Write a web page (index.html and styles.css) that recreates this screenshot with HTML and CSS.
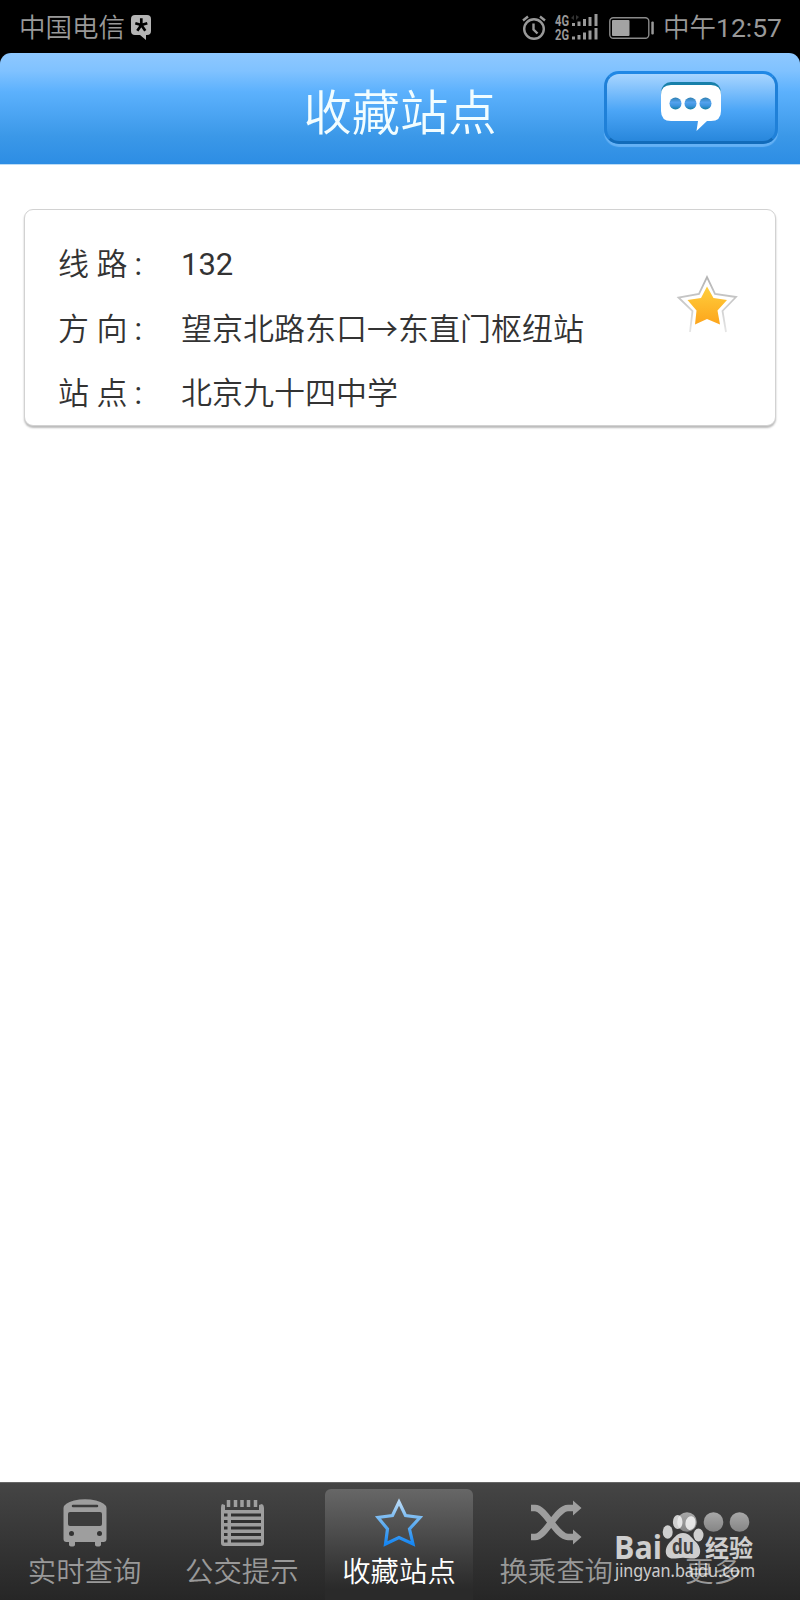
FILE: index.html
```html
<!DOCTYPE html>
<html lang="zh-CN">
  <head>
    <meta charset="UTF-8" />
    <meta name="viewport" content="width=device-width, initial-scale=1.0" />
    <title>收藏站点</title>
    <link rel="stylesheet" href="styles.css">
  </head>
  <body>
    <div class="status-bar">
      <span class="carrier">中国电信</span>
      <svg class="badge" width="20" height="25" viewBox="0 0 20 25">
        <path d="M4 0h12q4 0 4 4v12q0 4-4 4h-1v5l-6-5H4q-4 0-4-4V4q0-4 4-4z" fill="#b5b5b5" />
        <path d="M10.3 10V3.300M10.300 10l6-1.800M10.300 10l4 5.700M10.300 10l-4 5.700M10.300 10l-6-1.800" stroke="#000" stroke-width="2.700" />
      </svg>
      <div class="status-right">
        <svg width="24" height="25" viewBox="0 0 24 25" fill="none" stroke="#999" stroke-width="2">
          <circle cx="12" cy="14" r="9.800" stroke-width="2.400" />
          <path d="M1 5.500l5-4M23 5.500l-5-4M11.500 8.500v6l4 4" stroke-width="2.400" />
        </svg>
        <svg class="signal" width="44" height="27" viewBox="0 0 44 27" fill="#999">
          <text x="0" y="12" textLength="14" lengthAdjust="spacingAndGlyphs">4G</text>
          <text x="0" y="25.500" textLength="14" lengthAdjust="spacingAndGlyphs">2G</text>
          <path d="M17 9h3v3h-3zM22.500 7.500h3V12h-3zM28 5h3v7h-3zM33.500 3h3v9h-3zM39.500 0h3v12h-3z" />
          <path d="M17 22.500h3v3h-3zM22.500 21h3v4.500h-3zM28 18.500h3v7h-3zM33.500 16.500h3v9h-3zM39.500 14h3v11.500h-3z" />
          <path d="M16 4l3-3v5zM21 1v5l3-3z" fill="#333" />
        </svg>
        <svg class="battery" width="46" height="22" viewBox="0 0 46 22">
          <rect x=".8" y=".8" width="39" height="20.400" rx="3.500" fill="none" stroke="#8a8a8a" stroke-width="1.400" />
          <rect x="3" y="3" width="17.500" height="16" rx="1" fill="#a3a3a3" />
          <rect x="42.300" y="4.500" width="2.500" height="13" rx="1" fill="#999" />
        </svg>
        <span>中午<span class="num">12:57</span></span>
      </div>
    </div>

    <header class="header">
      <h1>收藏站点</h1>
      <button class="msg-btn">
        <svg width="62" height="50" viewBox="0 0 62 50">
          <defs>
            <linearGradient id="dot" x2="0" y2="1">
              <stop offset="0" stop-color="#2d7fb0" />
              <stop offset=".4" stop-color="#55a2ee" />
              <stop offset=".7" stop-color="#3b93dc" />
              <stop offset="1" stop-color="#147da0" />
            </linearGradient>
          </defs>
          <rect x="1" y="0" width="60" height="35" rx="10" fill="#1780aa" />
          <path d="M11 3h40q10 0 10 10v16q0 10-10 10h-4l-10.500 10 1.500-10H11Q1 39 1 29V13Q1 3 11 3z" fill="#fff" />
          <circle cx="15.500" cy="21.500" r="6" fill="url(#dot)" />
          <circle cx="30.500" cy="21.500" r="6" fill="url(#dot)" />
          <circle cx="45.500" cy="21.500" r="6" fill="url(#dot)" />
        </svg>
      </button>
    </header>

    <main>
      <div class="card">
        <dl>
          <div class="row"><dt>线 路<span class="num">:</span></dt><dd class="num">132</dd></div>
          <div class="row"><dt>方 向<span class="num">:</span></dt><dd>望京北路东口→东直门枢纽站</dd></div>
          <div class="row"><dt>站 点<span class="num">:</span></dt><dd>北京九十四中学</dd></div>
        </dl>
        <svg class="star" width="60" height="60" viewBox="0 0 60 60">
          <defs>
            <linearGradient id="gold" x2="0" y2="1">
              <stop offset="0" stop-color="#ffcf3c" />
              <stop offset="1" stop-color="#fda51c" />
            </linearGradient>
            <linearGradient id="edge" x2="0" y2="1">
              <stop offset="0" stop-color="#b4b4b4" />
              <stop offset=".5" stop-color="#ccc" />
              <stop offset="1" stop-color="#e6e6e6" />
            </linearGradient>
          </defs>
          <path d="M13 57l2.500-21L1.500 22.500 22 19 30 2l8 17 21 3-13.500 14L49 57" fill="none" stroke="url(#edge)" stroke-width="1.800" />
          <path d="M30 11.500l6.500 11.500 13.500 2-9.500 10.500L43 49.500l-13-5.500-12 5.500 1.500-14L10.500 25l13.500-2z" fill="url(#gold)" />
        </svg>
      </div>
    </main>

    <nav class="tabs">
      <a class="tab">
        <svg width="52" height="52" viewBox="0 0 52 52">
          <path d="M4.500 12Q5 7 15 4.500q11-2.500 22 0Q47 7 47.500 12v31q0 3-3 3H42v2.500q0 2-3 2t-3-2V46H16v2.500q0 2-3 2t-3-2V46H7.500q-3 0-3-3z" fill="#9e9e9e" />
          <path d="M14 10h24" stroke="#3b3b3b" stroke-width="2.500" stroke-linecap="round" />
          <rect x="9" y="16" width="34" height="14" rx="2" fill="#3c3c3c" />
          <circle cx="12.500" cy="37.500" r="2.500" fill="#333" />
          <circle cx="40.500" cy="37.500" r="2.500" fill="#333" />
        </svg>
        <span>实时查询</span>
      </a>
      <a class="tab">
        <svg width="52" height="52" viewBox="0 0 52 52">
          <path d="M6 8l3 1v5h34V9l3-1q2 1 2 4v35q0 3-3 3H8q-3 0-3-3V12q0-3 1-4z" fill="#9e9e9e" />
          <path d="M12.500 4v7M19.500 4v7M26 4v7M32.500 4v7M39.500 4v7" stroke="#9e9e9e" stroke-width="3.500" />
          <path d="M8 19h3.500M15 19h30M8 25.500h3.500M15 25.500h30M8 32h3.500M15 32h30M8 38.500h3.500M15 38.500h30M8 45h3.500M15 45h30" stroke="#303030" stroke-width="3" />
        </svg>
        <span>公交提示</span>
      </a>
      <a class="tab active">
        <svg width="52" height="52" viewBox="0 0 52 52">
          <defs>
            <linearGradient id="blue" x2="0" y2="1">
              <stop offset="0" stop-color="#b7d9f7" />
              <stop offset=".5" stop-color="#65b0f0" />
              <stop offset="1" stop-color="#1687f4" />
            </linearGradient>
          </defs>
          <path d="M26 6l6.500 13.500 14.500 2-10.500 11.500L40 48l-14-6.500L12.500 48l2-15L5 21.500l14.500-2z" fill="none" stroke="url(#blue)" stroke-width="3.200" />
        </svg>
        <span>收藏站点</span>
      </a>
      <a class="tab">
        <svg width="52" height="52" viewBox="0 0 52 52">
          <path d="M1 12h4c11 0 21 29 33 29h5M1 41h4C16 41 26 12 38 12h5" fill="none" stroke="#9e9e9e" stroke-width="6.500" />
          <path d="M43 4.500l8.500 7.500-8.500 7.500zM43 33.500l8.500 7.500-8.500 7.500z" fill="#9e9e9e" />
        </svg>
        <span>换乘查询</span>
      </a>
      <a class="tab">
        <svg width="74" height="52" viewBox="0 0 74 52">
          <defs>
            <linearGradient id="gray" x2="0" y2="1">
              <stop offset="0" stop-color="#a8a8a8" />
              <stop offset="1" stop-color="#858585" />
            </linearGradient>
          </defs>
          <circle cx="11" cy="26" r="9.800" fill="url(#gray)" />
          <circle cx="37.500" cy="26" r="9.800" fill="url(#gray)" />
          <circle cx="63.500" cy="26" r="9.800" fill="url(#gray)" />
        </svg>
        <span>更多</span>
      </a>
    </nav>

    <div class="watermark">
      <svg width="144" height="72" viewBox="0 0 144 72" fill="#fff">
        <text class="wm-brand" x="0" y="44.500" textLength="48" lengthAdjust="spacingAndGlyphs">Bai</text>
        <ellipse cx="53.700" cy="18" rx="5" ry="6.800" />
        <ellipse cx="63.700" cy="8" rx="4.800" ry="7" />
        <ellipse cx="76.500" cy="9" rx="5" ry="7" transform="rotate(10 76 9)" />
        <ellipse cx="84.500" cy="21" rx="5" ry="6.500" />
        <path d="M69 19c7 0 9 6 13 9 6 6 6 16.500-3 16.500-4 0-6-.8-10-.8s-6 .8-10 .8c-9 0-9-10.500-3-16.500 4-3 6-9 13-9z" />
        <text class="wm-du" x="58" y="40" textLength="22" lengthAdjust="spacingAndGlyphs">du</text>
        <text class="wm-cn" x="91" y="42.500">经验</text>
        <text class="wm-url" x="1" y="63" textLength="140" lengthAdjust="spacingAndGlyphs">jingyan.baidu.com</text>
      </svg>
    </div>
  </body>
</html>
```

FILE: styles.css
```css
* {
  box-sizing: border-box;
}
body {
  font-family: Roboto, "Noto Sans CJK SC", sans-serif;
  margin: 0;
  height: 1600px;
  display: flex;
  flex-direction: column;
  background-color: #fff;
  color: #333;
  position: relative;
  overflow: hidden;
}
svg {
  overflow: visible;
}
.num {
  font-weight: 400;
}
/* the shadow keeps the rounded header corners black */
.status-bar {
  height: 53px;
  display: flex;
  align-items: center;
  padding: 2px 18px 0 19px;
  background: #000;
  box-shadow: 0 12px 0 #000;
  color: #999;
  font-size: 26.5px;
  font-weight: 350;
  line-height: 40px;
}
.badge {
  margin-left: 6px;
}
.status-right {
  margin-left: auto;
  display: flex;
  align-items: center;
}
.signal {
  margin-left: 9px;
  font-size: 15px;
  font-weight: bold;
}
.battery {
  margin: 0 8px 0 10px;
}
.header {
  height: 112px;
  display: grid;
  grid-template-columns: 1fr auto 1fr;
  align-items: center;
  padding: 0 22px;
  background: linear-gradient(#8ec8ff, #80c2ff 16%, #5cb1fd 35%, #3b98e8 75%, #2d8de4);
  border-bottom: 1px solid #bcdcf6;
  border-radius: 11px 11px 0 0;
  z-index: 1;
}
.header h1 {
  grid-column: 2;
  margin: 10px 0 0;
  color: #f2fdff;
  font-size: 48.3px;
  font-weight: 350;
  line-height: 70px;
}
.msg-btn {
  justify-self: end;
  width: 174px;
  height: 73px;
  margin-bottom: 3px;
  padding: 8px 1px 0 0;
  display: flex;
  justify-content: center;
  align-items: flex-start;
  border: 3px solid #1f80d8;
  border-top-color: #2188e5;
  border-bottom-color: #126bba;
  border-radius: 15px;
  background: linear-gradient(#a8d5ff, #75bbfb 30%, #4ba5f6 55%, #2887dc);
  box-shadow: 0 3px 1px #65b1f5;
}
main {
  flex: 1;
  padding: 44px 24px 0;
}
.card {
  height: 217px;
  display: flex;
  justify-content: space-between;
  padding: 23px 38px 0 33px;
  background: #fff;
  border: 1px solid #d2d2d2;
  border-radius: 9px;
  box-shadow: 0 2px 2px #bbb;
}
dl {
  margin: 0;
}
.row {
  display: flex;
  height: 64.5px;
  font-size: 31px;
  font-weight: 350;
  line-height: 64.5px;
  white-space: nowrap;
}
dt {
  width: 123px;
}
dt span {
  margin-left: 7px;
}
dd {
  margin: 0;
}
.star {
  margin-top: 42px;
}
.tabs {
  height: 118px;
  display: grid;
  grid-template-columns: repeat(5, 1fr);
  padding: 6px 8px 0 6px;
  background: linear-gradient(#454545, #262626);
  border-top: 1px solid #666;
  color: #999;
  font-size: 28.4px;
  font-weight: 350;
}
.tab {
  display: flex;
  flex-direction: column;
  align-items: center;
  margin: 0 4.6px;
  padding-top: 7px;
  line-height: 50px;
}
.tab.active {
  color: #fff;
  background: linear-gradient(#676767, #2a2a2a 90%);
  border-radius: 6px 6px 0 0;
}
.watermark {
  position: absolute;
  left: 614px;
  top: 1514px;
  opacity: 0.76;
  z-index: 1;
}
.watermark svg {
  display: block;
}
.wm-brand {
  font: bold 32px "Open Sans", sans-serif;
}
.wm-du {
  font: bold 21px "Open Sans", sans-serif;
  fill: #444;
}
.wm-cn {
  font: bold 24px "Noto Sans CJK SC", sans-serif;
}
.wm-url {
  font: 18px "Noto Sans", sans-serif;
}
```
